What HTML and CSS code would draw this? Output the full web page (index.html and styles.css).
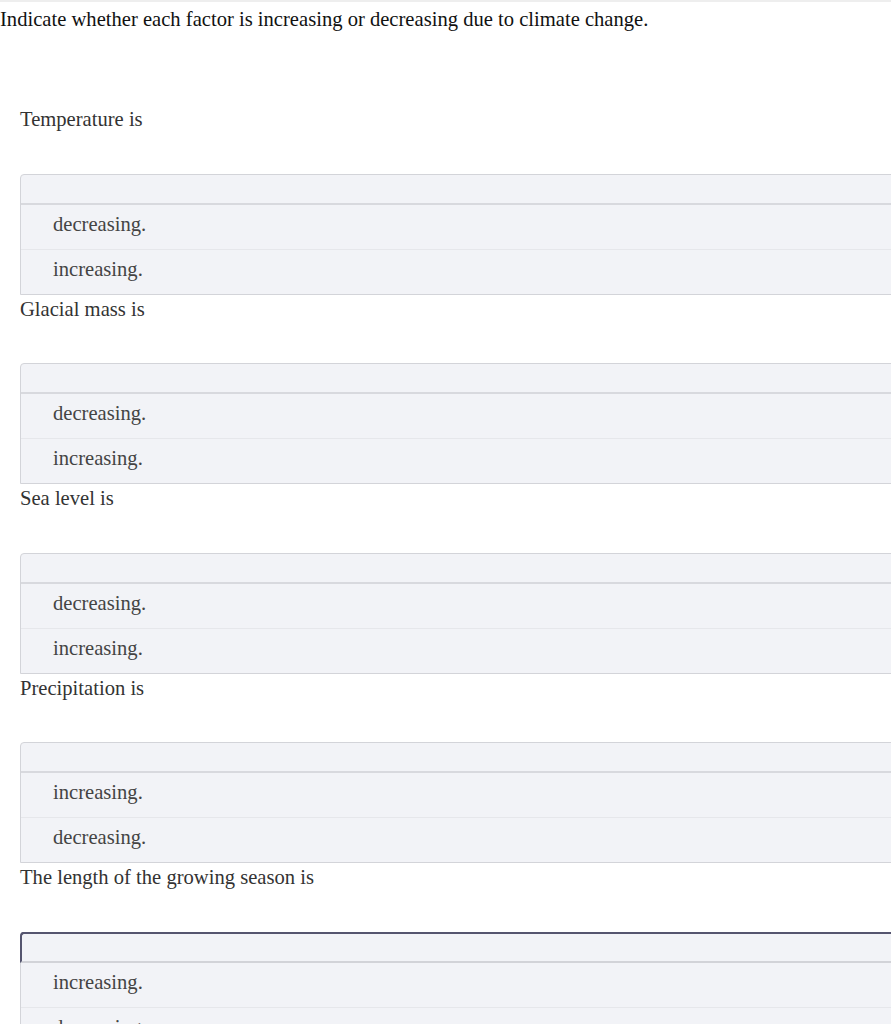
FILE: index.html
```html
<!DOCTYPE html>
<html lang="en">
<head>
<meta charset="utf-8">
<title>Climate change factors</title>
<link rel="stylesheet" href="styles.css">
</head>
<body>
<div class="topbar"></div>
<p class="prompt">Indicate whether each factor is increasing or decreasing due to climate change.</p>
<div class="questions">
  <div class="question">
    <div class="label">Temperature is</div>
    <div class="box">
      <div class="head"></div>
      <div class="opt">decreasing.</div>
      <div class="opt">increasing.</div>
    </div>
  </div>
  <div class="question">
    <div class="label">Glacial mass is</div>
    <div class="box">
      <div class="head"></div>
      <div class="opt">decreasing.</div>
      <div class="opt">increasing.</div>
    </div>
  </div>
  <div class="question">
    <div class="label">Sea level is</div>
    <div class="box">
      <div class="head"></div>
      <div class="opt">decreasing.</div>
      <div class="opt">increasing.</div>
    </div>
  </div>
  <div class="question">
    <div class="label">Precipitation is</div>
    <div class="box">
      <div class="head"></div>
      <div class="opt">increasing.</div>
      <div class="opt">decreasing.</div>
    </div>
  </div>
  <div class="question">
    <div class="label">The length of the growing season is</div>
    <div class="box focused">
      <div class="head"></div>
      <div class="opt">increasing.</div>
      <div class="opt">decreasing.</div>
    </div>
  </div>
</div>
</body>
</html>
```
FILE: styles.css
```css
html, body {
  margin: 0;
  padding: 0;
  background: #ffffff;
  overflow-x: hidden;
}
body {
  font-family: "Liberation Serif", "Times New Roman", serif;
}
.topbar {
  height: 2px;
  background: #eeeeee;
}
.prompt {
  margin: 0;
  font-size: 20.6px;
  line-height: 34px;
  color: #111111;
}
.questions {
  padding-left: 20px;
  margin-top: 69px;
}
.label {
  font-size: 20.6px;
  line-height: 28px;
  color: #333333;
}
.box {
  width: 1000px;
  margin-top: 40.5px;
  border: 1px solid #d3d4d9;
  border-radius: 4px 0 0 0;
  background: #f2f3f7;
}
.head {
  height: 28px;
  border-bottom: 2px solid #d8d9de;
  border-radius: 3px 0 0 0;
}
.opt {
  height: 44px;
  line-height: 38px;
  padding-left: 32px;
  font-size: 20.6px;
  color: #444444;
  border-bottom: 1px solid #e6e7eb;
}
.opt:last-child {
  border-bottom: none;
}
.box.focused {
  border-top-color: #55556f;
}
.box.focused .head {
  border-left: 2px solid #55556f;
  margin-left: -1px;
  border-top: 2px solid #55556f;
  margin-top: -1px;
  border-radius: 4px 0 0 0;
  height: 27px;
  border-bottom-color: #d2d3d8;
}
```
